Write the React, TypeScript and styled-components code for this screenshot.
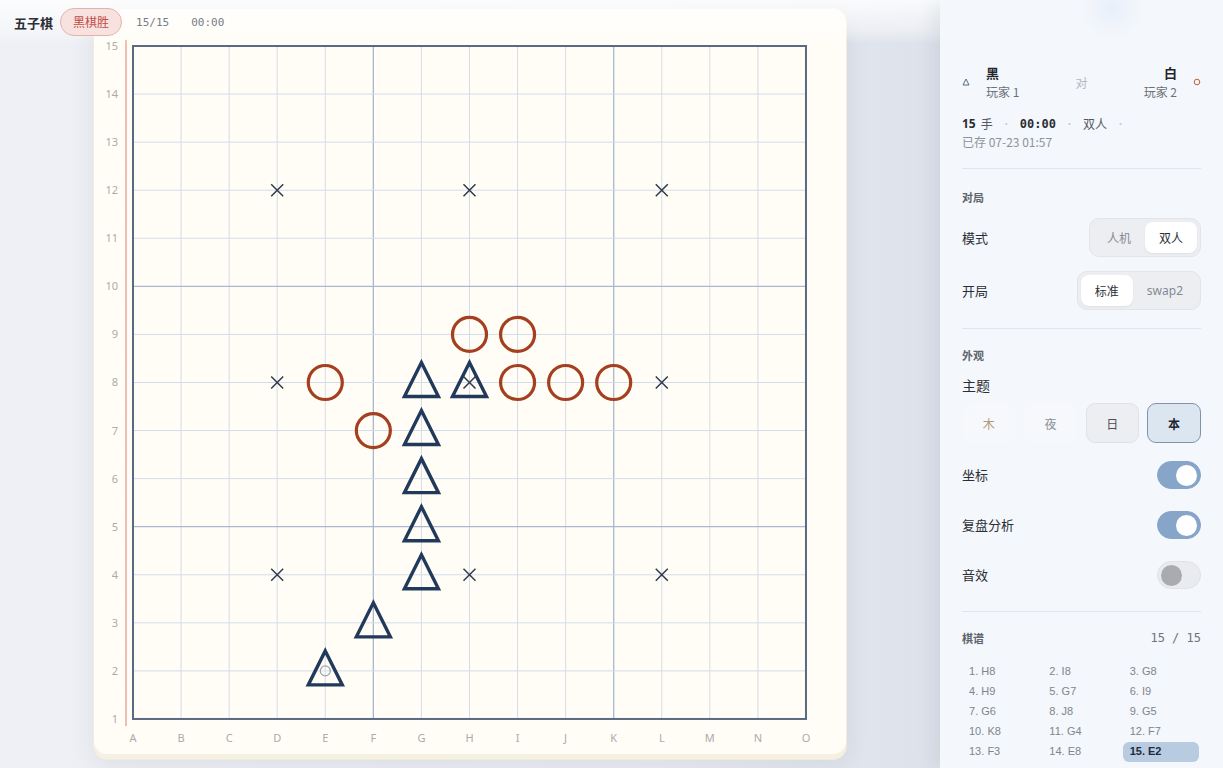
import styled, { createGlobalStyle } from "styled-components";

const GlobalStyle = createGlobalStyle`
  html, body {
    margin: 0;
    padding: 0;
    width: 1223px;
    height: 768px;
    overflow: hidden;
    font-family: "Noto Sans", "Noto Sans CJK SC", sans-serif;
    background: #eceff4;
  }
`;

const COLS = "ABCDEFGHIJKLMNO".split("");
const X0 = 40;
const Y0 = 38;
const STEP = 48.07;

const moves = [
  "H8", "I8", "G8", "H9", "G7", "I9", "G6", "J8", "G5", "K8",
  "G4", "F7", "F3", "E8", "E2",
];

const stars = ["D12", "H12", "L12", "D8", "H8", "L8", "D4", "H4", "L4"];

function pos(m: string) {
  const c = COLS.indexOf(m[0]);
  const r = parseInt(m.slice(1), 10);
  return { x: X0 + c * STEP, y: Y0 + (15 - r) * STEP };
}

export default function App() {
  return (
    <>
      <GlobalStyle />
      <Page>
        <Main>
          <TopBar>
            <Title>五子棋</Title>
            <Badge>黑棋胜</Badge>
            <Mono>15/15</Mono>
            <Mono>00:00</Mono>
          </TopBar>
          <Card>
            <Board />
          </Card>
        </Main>
        <Panel>
          <Players>
            <Side>
              <svg width="8" height="8" viewBox="0 0 8 8">
                <path d="M4 1 L7 7 L1 7 Z" fill="none" stroke="#5b6b80" strokeWidth="1" />
              </svg>
              <PlayerInfo>
                <PlayerColor>黑</PlayerColor>
                <PlayerName>玩家 1</PlayerName>
              </PlayerInfo>
            </Side>
            <Versus>对</Versus>
            <Side>
              <PlayerInfo $right>
                <PlayerColor>白</PlayerColor>
                <PlayerName>玩家 2</PlayerName>
              </PlayerInfo>
              <svg width="8" height="8" viewBox="0 0 8 8">
                <circle cx="4" cy="4" r="2.8" fill="none" stroke="#c0603a" strokeWidth="1" />
              </svg>
            </Side>
          </Players>
          <Stats>
            <b>15</b>手<Dot>•</Dot>
            <StatMono>00:00</StatMono>
            <Dot>•</Dot>双人<Dot>•</Dot>
          </Stats>
          <Saved>已存 07-23 01:57</Saved>
          <Divider />
          <SectionTitle>对局</SectionTitle>
          <Row $h={53}>
            <Label>模式</Label>
            <Segmented>
              <Seg>人机</Seg>
              <Seg $active>双人</Seg>
            </Segmented>
          </Row>
          <Row $h={53}>
            <Label>开局</Label>
            <Segmented>
              <Seg $active>标准</Seg>
              <Seg>swap2</Seg>
            </Segmented>
          </Row>
          <Divider $top={11} />
          <SectionTitle $top={18} $bottom={12}>外观</SectionTitle>
          <ThemeLabel>主题</ThemeLabel>
          <Themes>
            <ThemeBtn $kind="wood">木</ThemeBtn>
            <ThemeBtn $kind="night">夜</ThemeBtn>
            <ThemeBtn $kind="day">日</ThemeBtn>
            <ThemeBtn $kind="active">本</ThemeBtn>
          </Themes>
          <Row $h={50}>
            <Label>坐标</Label>
            <Toggle $on />
          </Row>
          <Row $h={50}>
            <Label>复盘分析</Label>
            <Toggle $on />
          </Row>
          <Row $h={50}>
            <Label>音效</Label>
            <Toggle />
          </Row>
          <Divider $top={11} />
          <RecordHead>
            <SectionTitle as="span">棋谱</SectionTitle>
            <RecordCount>15 / 15</RecordCount>
          </RecordHead>
          <MoveGrid>
            {moves.map((m, i) => (
              <MoveItem key={i} $active={i === moves.length - 1}>
                {i + 1}. {m}
              </MoveItem>
            ))}
          </MoveGrid>
        </Panel>
      </Page>
    </>
  );
}

function Board() {
  const span = STEP * 14;
  return (
    <BoardSvg width="754" height="752" viewBox="0 0 754 752">
      <line x1="33" y1="32" x2="33" y2="718" stroke="#eba79c" strokeWidth="1.5" />
      {COLS.map((c, i) => {
        const x = X0 + i * STEP;
        const strong = i === 5 || i === 10;
        return (
          <g key={c}>
            <line
              x1={x}
              y1={Y0}
              x2={x}
              y2={Y0 + span}
              stroke={strong ? "#a9b8cf" : "#d3dcea"}
              strokeWidth={strong ? 1.3 : 1}
            />
            <text x={x} y={734} textAnchor="middle" fontSize="11" fill="#ababab" fontFamily="Noto Sans, sans-serif">
              {c}
            </text>
          </g>
        );
      })}
      {Array.from({ length: 15 }, (_, i) => {
        const y = Y0 + i * STEP;
        const r = 15 - i;
        const strong = r === 5 || r === 10;
        return (
          <g key={r}>
            <line
              x1={X0}
              y1={y}
              x2={X0 + span}
              y2={y}
              stroke={strong ? "#a9b8cf" : "#d3dcea"}
              strokeWidth={strong ? 1.3 : 1}
            />
            <text x={25} y={y + 4} textAnchor="end" fontSize="11" fill="#ababab" fontFamily="Noto Sans, sans-serif">
              {r}
            </text>
          </g>
        );
      })}
      <rect x={X0} y={Y0} width={span} height={span} fill="none" stroke="#5b6a84" strokeWidth="2" />
      {stars.map((s) => {
        const { x, y } = pos(s);
        return (
          <path
            key={s}
            d={`M${x - 6} ${y - 6} L${x + 6} ${y + 6} M${x + 6} ${y - 6} L${x - 6} ${y + 6}`}
            stroke="#2f3b4e"
            strokeWidth="1.5"
          />
        );
      })}
      {moves.map((m, i) => {
        const { x, y } = pos(m);
        if (i % 2 === 1) {
          return <circle key={m} cx={x} cy={y} r={17} fill="none" stroke="#a4401f" strokeWidth="3.2" />;
        }
        return (
          <path
            key={m}
            d={`M${x} ${y - 20} L${x + 17} ${y + 14} L${x - 17} ${y + 14} Z`}
            fill="none"
            stroke="#213a5c"
            strokeWidth="3.4"
            strokeLinejoin="miter"
          />
        );
      })}
      {(() => {
        const { x, y } = pos("E2");
        return <circle cx={x} cy={y} r={5} fill="none" stroke="#9aa3ad" strokeWidth="1.2" />;
      })()}
    </BoardSvg>
  );
}

const Page = styled.div`
  display: flex;
  width: 1223px;
  height: 768px;
`;

const Main = styled.div`
  position: relative;
  flex: 1;
  display: flex;
  align-items: center;
  justify-content: center;
  background: linear-gradient(90deg, #eef0f5 0%, #e9ecf2 70%, #dde1ea 100%);
`;

const TopBar = styled.div`
  position: absolute;
  top: 0;
  left: 0;
  right: 0;
  height: 44px;
  display: flex;
  align-items: center;
  gap: 14px;
  padding: 0 14px;
  box-sizing: border-box;
  background: linear-gradient(180deg, rgba(255, 255, 255, 0.85) 0%, rgba(255, 255, 255, 0.4) 70%, rgba(255, 255, 255, 0) 100%);
  z-index: 2;
`;

const Title = styled.span`
  font-family: "Noto Sans CJK SC", sans-serif;
  font-weight: 700;
  font-size: 13px;
  color: #2b2f36;
  margin-right: -7px;
`;

const Badge = styled.span`
  font-family: "Noto Sans CJK SC", sans-serif;
  font-size: 12px;
  color: #c14b45;
  background: #f8e2e0;
  border: 1px solid #e4b2ad;
  border-radius: 14px;
  padding: 4px 12px;
  line-height: 18px;
`;

const Mono = styled.span`
  font-family: "DejaVu Sans Mono", monospace;
  font-size: 11px;
  color: #777c85;
  margin-right: 8px;
`;

const Card = styled.div`
  width: 754px;
  height: 752px;
  background: #fffdf6;
  border-radius: 14px;
  border: 1px solid #f1ecdd;
  box-sizing: border-box;
  box-shadow: 0 6px 24px rgba(40, 50, 70, 0.08), inset 0 -5px 0 #f5f0e1;
  overflow: hidden;
`;

const BoardSvg = styled.svg`
  display: block;
  margin: -1px;
`;

const Panel = styled.div`
  width: 283px;
  height: 768px;
  box-sizing: border-box;
  padding: 62px 22px 0;
  background: radial-gradient(circle at 172px 8px, #e9f0fb 0, rgba(244, 247, 251, 0) 32px), #f4f7fb;
  box-shadow: -6px 0 18px rgba(40, 50, 70, 0.08);
  font-family: "Noto Sans CJK SC", sans-serif;
  color: #2f333a;
  z-index: 3;
`;

const Players = styled.div`
  display: flex;
  align-items: center;
  justify-content: space-between;
  height: 40px;
`;

const Side = styled.div`
  display: flex;
  align-items: center;
  gap: 16px;
`;

const PlayerInfo = styled.div<{ $right?: boolean }>`
  display: flex;
  flex-direction: column;
  align-items: ${(p) => (p.$right ? "flex-end" : "flex-start")};
  line-height: 19px;
`;

const PlayerColor = styled.span`
  font-weight: 700;
  font-size: 13px;
  color: #22262c;
`;

const PlayerName = styled.span`
  font-size: 12px;
  color: #6b7079;
`;

const Versus = styled.span`
  font-size: 12px;
  color: #b4b8bf;
`;

const Stats = styled.div`
  margin-top: 13px;
  font-size: 12px;
  color: #555a62;
  display: flex;
  align-items: center;
  line-height: 18px;
  b {
    font-family: "Noto Sans", sans-serif;
    color: #2a2e34;
    margin-right: 5px;
  }
`;

const StatMono = styled.span`
  font-family: "DejaVu Sans Mono", monospace;
  font-weight: 700;
  color: #2a2e34;
`;

const Dot = styled.span`
  color: #c5c9cf;
  font-size: 9px;
  margin: 0 9px;
`;

const Saved = styled.div`
  font-size: 12px;
  color: #8d929a;
  line-height: 18px;
`;

const Divider = styled.div<{ $top?: number }>`
  height: 1px;
  background: #e2e6ec;
  margin-top: ${(p) => p.$top ?? 17}px;
`;

const SectionTitle = styled.div<{ $top?: number; $bottom?: number }>`
  display: block;
  font-size: 11px;
  font-weight: 700;
  color: #5f646c;
  margin: ${(p) => p.$top ?? 20}px 0 ${(p) => p.$bottom ?? 6}px;
  line-height: 16px;
`;

const Row = styled.div<{ $h: number }>`
  display: flex;
  align-items: center;
  justify-content: space-between;
  height: ${(p) => p.$h}px;
`;

const Label = styled.div`
  font-size: 13px;
  color: #2b2f35;
  line-height: 20px;
`;

const ThemeLabel = styled(Label)`
  font-size: 14px;
`;

const Segmented = styled.div`
  display: flex;
  background: #eceef2;
  border: 1px solid #e1e4e9;
  border-radius: 10px;
  padding: 3px;
`;

const Seg = styled.div<{ $active?: boolean }>`
  height: 31px;
  padding: 0 14px;
  display: flex;
  align-items: center;
  border-radius: 8px;
  font-size: 12px;
  font-family: "Noto Sans", "Noto Sans CJK SC", sans-serif;
  color: ${(p) => (p.$active ? "#2b2f35" : "#858a92")};
  background: ${(p) => (p.$active ? "#ffffff" : "transparent")};
  box-shadow: ${(p) => (p.$active ? "0 1px 2px rgba(0,0,0,0.06)" : "none")};
`;

const Themes = styled.div`
  display: grid;
  grid-template-columns: repeat(4, 1fr);
  gap: 8px;
  margin: 8px 0 7px;
`;

const themeStyles: Record<string, string> = {
  wood: "color:#b49a78;background:rgba(255,255,255,0.18);border-color:transparent;",
  night: "color:#8b9099;background:rgba(255,255,255,0.18);border-color:transparent;",
  day: "color:#4a4f57;background:#eceef2;border-color:#dfe2e7;",
  active: "color:#1f2630;background:#dce6f1;border-color:#7f93b0;font-weight:700;",
};

const ThemeBtn = styled.div<{ $kind: string }>`
  height: 38px;
  border-radius: 9px;
  border: 1px solid transparent;
  display: flex;
  align-items: center;
  justify-content: center;
  font-size: 12px;
  ${(p) => themeStyles[p.$kind]}
`;

const Toggle = styled.div<{ $on?: boolean }>`
  width: 44px;
  height: 28px;
  border-radius: 14px;
  box-sizing: border-box;
  background: ${(p) => (p.$on ? "#86a5c9" : "#e9ebef")};
  border: 1px solid ${(p) => (p.$on ? "#86a5c9" : "#dfe2e7")};
  display: flex;
  align-items: center;
  justify-content: ${(p) => (p.$on ? "flex-end" : "flex-start")};
  padding: 0 3px;
  &::after {
    content: "";
    width: 21px;
    height: 21px;
    border-radius: 50%;
    background: ${(p) => (p.$on ? "#ffffff" : "#a9abb0")};
  }
`;

const RecordHead = styled.div`
  display: flex;
  align-items: center;
  justify-content: space-between;
  margin-top: 18px;
  > span {
    margin: 0;
  }
`;

const RecordCount = styled.span`
  font-family: "DejaVu Sans Mono", monospace;
  font-size: 12px;
  color: #6f747c;
`;

const MoveGrid = styled.div`
  display: grid;
  grid-template-columns: repeat(3, 1fr);
  column-gap: 2px;
  margin-top: 16px;
`;

const MoveItem = styled.div<{ $active?: boolean }>`
  font-family: "Liberation Sans", Arial, sans-serif;
  font-size: 11px;
  line-height: 19px;
  height: 20px;
  padding-left: 7px;
  margin-right: ${(p) => (p.$active ? "2px" : "0")};
  border-radius: 6px;
  color: ${(p) => (p.$active ? "#1d2a40" : "#80858d")};
  font-weight: ${(p) => (p.$active ? 700 : 400)};
  background: ${(p) => (p.$active ? "#b9cbe0" : "transparent")};
`;
